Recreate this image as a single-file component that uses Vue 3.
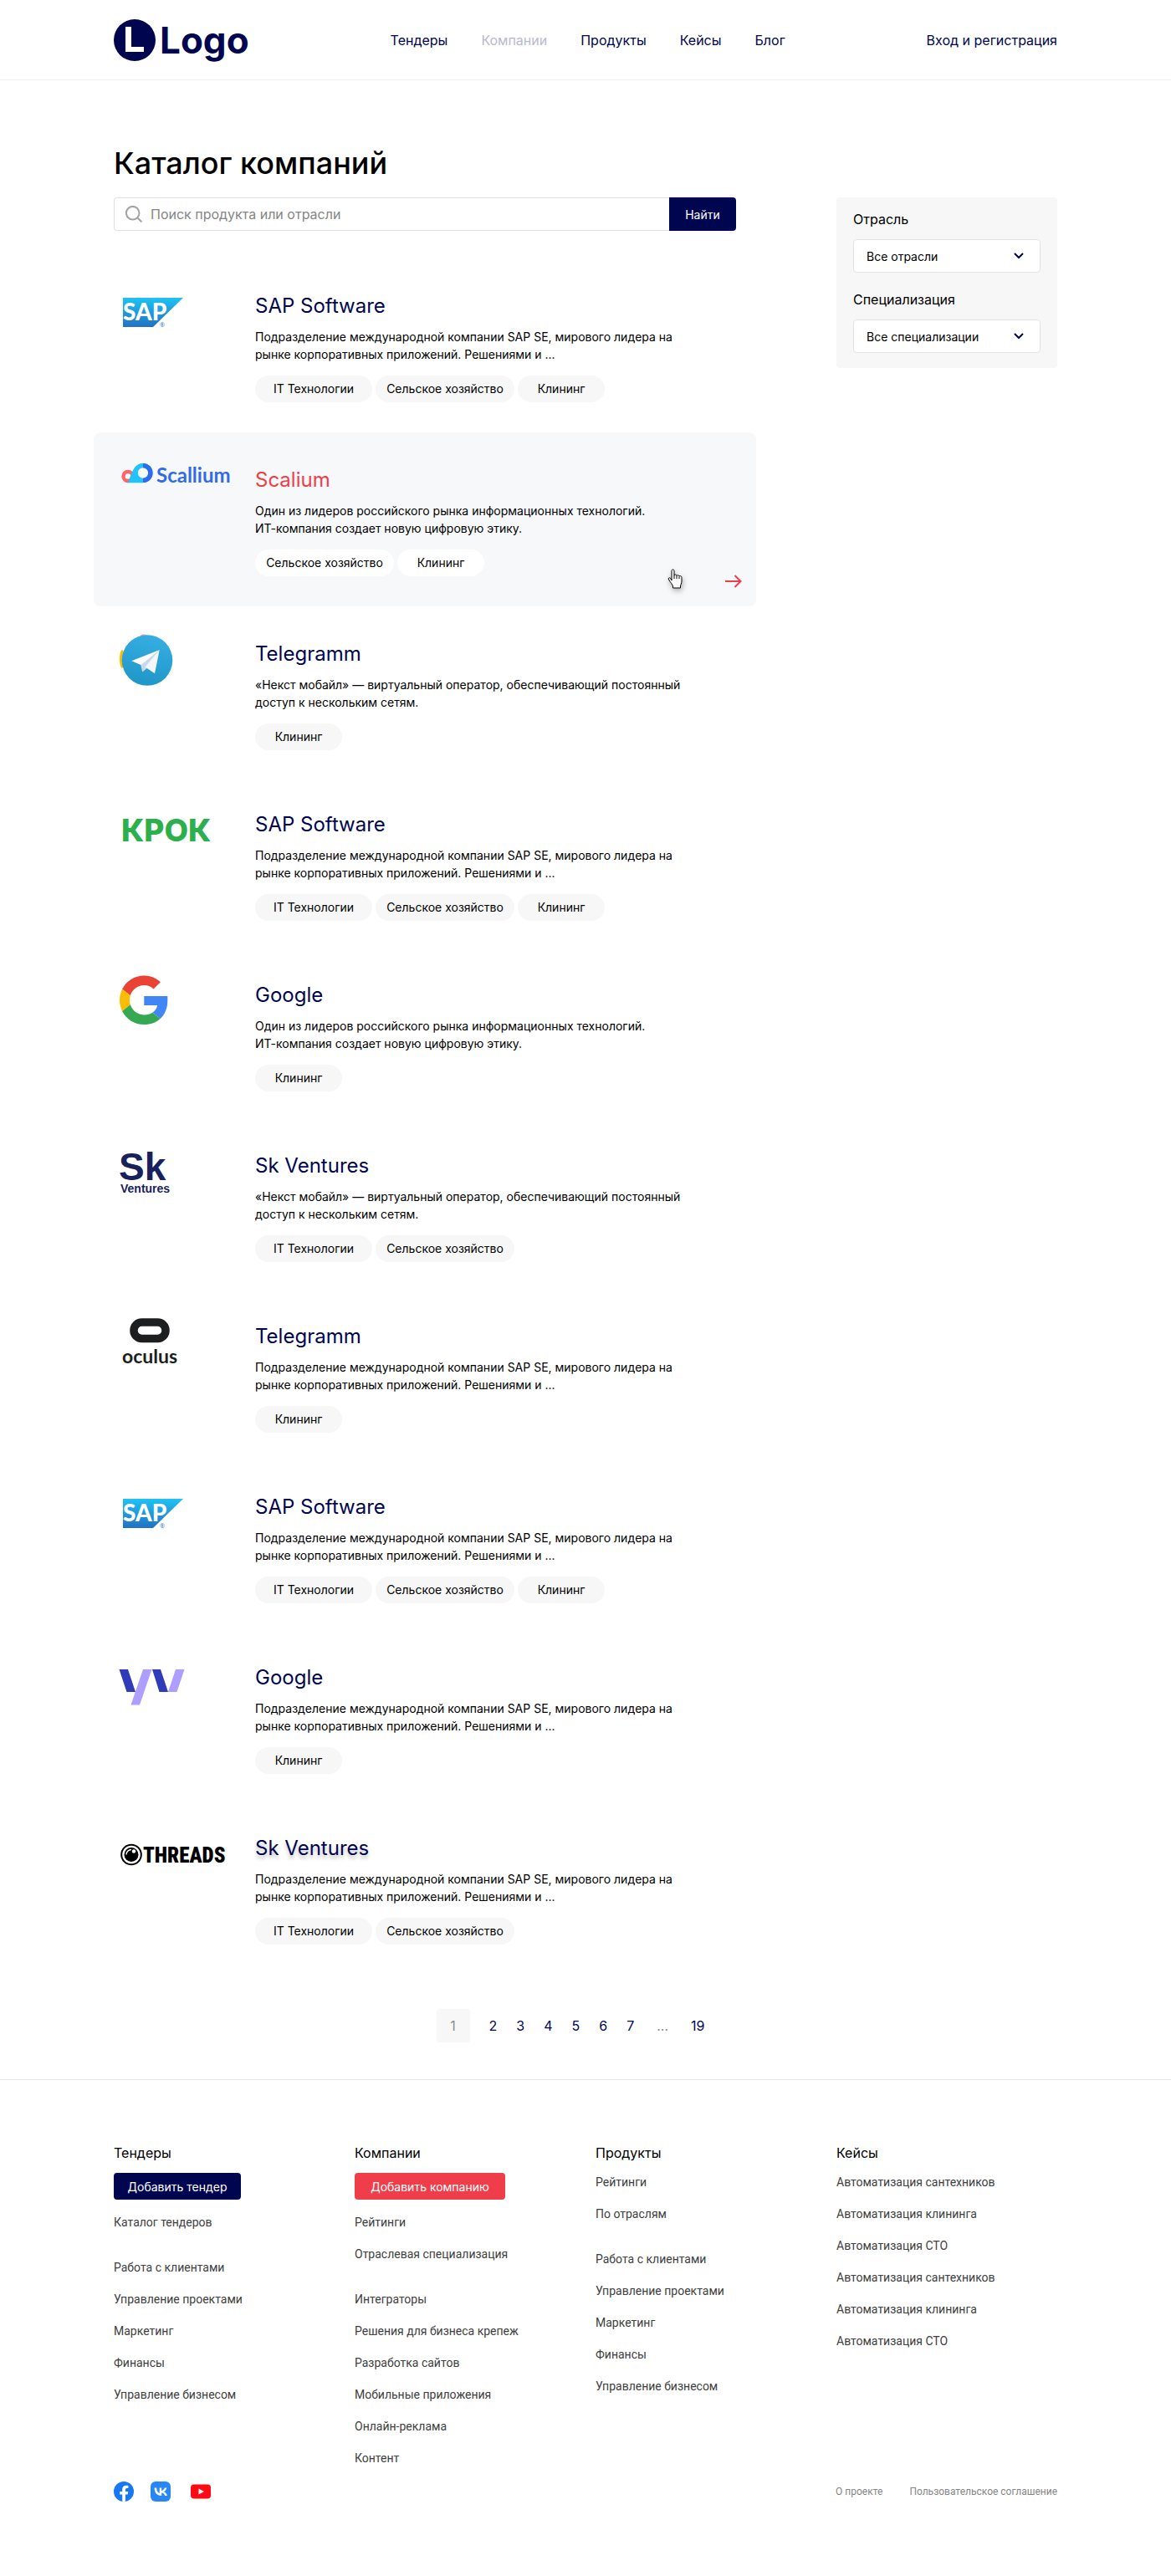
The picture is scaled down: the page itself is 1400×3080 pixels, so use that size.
<script setup>
import { ref } from 'vue'

const nav = ['Тендеры', 'Компании', 'Продукты', 'Кейсы', 'Блог']
const activeNav = 'Компании'

const query = ref('')
const industry = ref('Все отрасли')
const specialization = ref('Все специализации')

const about = {
  sap: ['Подразделение международной компании SAP SE, мирового лидера на', 'рынке корпоративных приложений. Решениями и ...'],
  it: ['Один из лидеров российского рынка информационных технологий.', 'ИТ-компания создает новую цифровую этику.'],
  next: ['«Некст мобайл» — виртуальный оператор, обеспечивающий постоянный', 'доступ к нескольким сетям.'],
}
const IT = 'IT Технологии'
const AGRO = 'Сельское хозяйство'
const CLEAN = 'Клининг'

const companies = [
  { logo: 'sap', name: 'SAP Software', text: about.sap, tags: [IT, AGRO, CLEAN] },
  { logo: 'scallium', name: 'Scalium', text: about.it, tags: [AGRO, CLEAN], featured: true },
  { logo: 'telegram', name: 'Telegramm', text: about.next, tags: [CLEAN] },
  { logo: 'krok', name: 'SAP Software', text: about.sap, tags: [IT, AGRO, CLEAN] },
  { logo: 'google', name: 'Google', text: about.it, tags: [CLEAN] },
  { logo: 'sk', name: 'Sk Ventures', text: about.next, tags: [IT, AGRO] },
  { logo: 'oculus', name: 'Telegramm', text: about.sap, tags: [CLEAN] },
  { logo: 'sap', name: 'SAP Software', text: about.sap, tags: [IT, AGRO, CLEAN] },
  { logo: 'yv', name: 'Google', text: about.sap, tags: [CLEAN] },
  { logo: 'threads', name: 'Sk Ventures', text: about.sap, tags: [IT, AGRO], shadow: true },
]
const tagClass = { [IT]: 'tag-it', [AGRO]: 'tag-agro', [CLEAN]: 'tag-clean' }

const pages = ['2', '3', '4', '5', '6', '7']

const footer = [
  {
    title: 'Тендеры',
    button: 'Добавить тендер',
    kind: 'navy',
    groups: [['Каталог тендеров'], ['Работа с клиентами', 'Управление проектами', 'Маркетинг', 'Финансы', 'Управление бизнесом']],
  },
  {
    title: 'Компании',
    button: 'Добавить компанию',
    kind: 'red',
    groups: [['Рейтинги', 'Отраслевая специализация'], ['Интеграторы', 'Решения для бизнеса крепеж', 'Разработка сайтов', 'Мобильные приложения', 'Онлайн-реклама', 'Контент']],
  },
  {
    title: 'Продукты',
    groups: [['Рейтинги', 'По отраслям'], ['Работа с клиентами', 'Управление проектами', 'Маркетинг', 'Финансы', 'Управление бизнесом']],
  },
  {
    title: 'Кейсы',
    groups: [['Автоматизация сантехников', 'Автоматизация клининга', 'Автоматизация СТО', 'Автоматизация сантехников', 'Автоматизация клининга', 'Автоматизация СТО']],
  },
]
</script>

<template>
  <div class="page">
    <header class="header">
      <div class="container header-row">
        <a class="brand" href="#" aria-label="Logo">
          <svg class="brand-mark" viewBox="0 0 50 50" aria-hidden="true">
            <circle cx="25" cy="25" r="25" fill="#00054f" />
            <path d="M14 9h7v24h15v6H14z" fill="#fff" />
          </svg>
          <span class="brand-name">Logo</span>
        </a>
        <nav class="nav">
          <a v-for="item in nav" :key="item" href="#" :class="{ active: item === activeNav }">{{ item }}</a>
        </nav>
        <a class="login" href="#">Вход и регистрация</a>
      </div>
    </header>

    <div class="container">
      <h1>Каталог компаний</h1>
      <div class="layout">
        <main>
          <form class="search" @submit.prevent>
            <label class="search-field">
              <svg viewBox="0 0 20 20" aria-hidden="true" fill="none" stroke="#a3a3a8" stroke-width="2">
                <circle cx="8.7" cy="8.7" r="7.8" />
                <path d="M14 14l5.4 5.4" />
              </svg>
              <input v-model="query" type="text" placeholder="Поиск продукта или отрасли" aria-label="Поиск продукта или отрасли" />
            </label>
            <button type="submit">Найти</button>
          </form>

          <ul class="companies">
            <li v-for="(c, i) in companies" :key="i" class="company" :class="{ featured: c.featured }">
              <div class="logo">
                <svg v-if="c.logo === 'sap'" viewBox="0 0 145 70">
                  <defs>
                    <linearGradient id="sapFill" x1="0" y1="0" x2="0" y2="1">
                      <stop offset="0" stop-color="#1fc3f3" />
                      <stop offset="1" stop-color="#2271c3" />
                    </linearGradient>
                  </defs>
                  <path d="M11 17h72L47 52H11z" fill="url(#sapFill)" />
                  <text x="11" y="44" class="t-sap">SAP</text>
                  <text x="55" y="52" class="t-reg">®</text>
                </svg>

                <svg v-else-if="c.logo === 'scallium'" viewBox="0 0 145 70">
                  <circle cx="17" cy="22.5" r="5.5" fill="none" stroke="#ff6468" stroke-width="4.4" />
                  <path d="M16.5 30.2C20 27 21 8 35 6.8v23.4z" fill="#22c3fb" />
                  <circle cx="35" cy="18.5" r="8.9" fill="#f7f8fa" stroke="#22c3fb" stroke-width="5.4" />
                  <path d="M35 9.6a8.9 8.9 0 0 1 0 17.8" fill="none" stroke="#2f6bea" stroke-width="5.4" />
                  <text x="51" y="30" class="t-scallium">Scallium</text>
                </svg>

                <svg v-else-if="c.logo === 'telegram'" viewBox="0 0 145 70">
                  <defs>
                    <linearGradient id="tgFill" x1=".6" y1="0" x2=".4" y2="1">
                      <stop offset="0" stop-color="#37aee2" />
                      <stop offset="1" stop-color="#1e96c8" />
                    </linearGradient>
                  </defs>
                  <ellipse cx="10" cy="33" rx="3" ry="11" fill="#fbbc05" />
                  <ellipse cx="36" cy="7" rx="5" ry="3.5" fill="#f09a93" />
                  <circle cx="40" cy="34.5" r="30.3" fill="url(#tgFill)" />
                  <path d="M32 39l2.3 9.5 6-5L54.7 22z" fill="#c8daea" />
                  <path d="M21.3 35.3L54.7 22 32.5 40z" fill="#fff" />
                  <path d="M37.5 42.5L54.7 22 49 50.3z" fill="#f2f7fb" />
                </svg>

                <svg v-else-if="c.logo === 'krok'" viewBox="0 0 145 70">
                  <text x="9" y="47" class="t-krok">КРОК</text>
                </svg>

                <svg v-else-if="c.logo === 'google'" viewBox="0 0 145 70">
                  <g transform="translate(7 3.5) scale(1.22)">
                    <path fill="#EA4335" d="M24 9.5c3.54 0 6.71 1.22 9.21 3.6l6.85-6.85C35.9 2.38 30.47 0 24 0 14.62 0 6.51 5.38 2.56 13.22l7.98 6.19C12.43 13.72 17.74 9.5 24 9.5z" />
                    <path fill="#4285F4" d="M46.98 20H24v9h13c-.6 3-2.3 5.5-4.8 7.2l7.73 6C44.4 38 46.98 32 46.98 24.55z" />
                    <path fill="#FBBC05" d="M10.53 28.59c-.48-1.45-.76-2.99-.76-4.59s.27-3.14.76-4.59l-7.98-6.19C.92 16.46 0 20.12 0 24s.92 7.54 2.56 10.78z" />
                    <path fill="#34A853" d="M24 48c6.48 0 11.93-2.13 15.89-5.81l-7.73-6c-2.15 1.45-4.92 2.3-8.16 2.3-6.26 0-11.57-4.22-13.47-9.91l-7.98 6.19C6.51 42.62 14.62 48 24 48z" />
                  </g>
                </svg>

                <svg v-else-if="c.logo === 'sk'" viewBox="0 0 145 70">
                  <text x="6" y="44" class="t-sk">Sk</text>
                  <text x="8" y="59" class="t-ventures">Ventures</text>
                </svg>

                <svg v-else-if="c.logo === 'oculus'" viewBox="0 0 145 70">
                  <rect x="24" y="10" width="38" height="19.5" rx="9.5" fill="#fff" stroke="#1c1e20" stroke-width="9.5" />
                  <text x="10" y="59" class="t-oculus">oculus</text>
                </svg>

                <svg v-else-if="c.logo === 'yv'" viewBox="0 0 145 70">
                  <path d="M6.5 17H17l9 27H15.5zM46 17h10l9 27H54.5z" fill="#2f3bb8" />
                  <path d="M35 17h10.5L31 59.5H20.5zM74 17h10.5l-9 27H65z" fill="#ad9eff" />
                </svg>

                <svg v-else viewBox="0 0 145 70">
                  <circle cx="21" cy="34.5" r="11.8" fill="#fff" stroke="#000" stroke-width="2" />
                  <circle cx="21" cy="34.5" r="8.5" />
                  <path d="M15 34.5a6 6 0 0 1 6-6" fill="none" stroke="#fff" stroke-width="1.4" />
                  <circle cx="24" cy="30.5" r="2.2" fill="#fff" />
                  <text x="35" y="44" class="t-threads">THREADS</text>
                </svg>
              </div>
              <div class="info">
                <h2 :class="{ shadow: c.shadow }"><a href="#">{{ c.name }}</a></h2>
                <p>{{ c.text[0] }}<br />{{ c.text[1] }}</p>
                <div class="tags">
                  <span v-for="t in c.tags" :key="t" class="tag" :class="tagClass[t]">{{ t }}</span>
                </div>
              </div>
              <template v-if="c.featured">
                <svg class="pointer" viewBox="0 0 18 24" aria-hidden="true">
                  <path d="M5 14V2.5C5 .4 8 .4 8 2.5V8c.3-1.5 3-1.3 3 .5.4-1.2 3-1 3 .7.5-1 3-.8 3 1.3V15c0 2.5-1.5 4-1.5 6v2h-9v-2C6 18.5 3.5 16.5 1.5 13c-1-1.8.8-3 2-1.8z" fill="#fff" stroke="#000" stroke-width="1" />
                  <path d="M8 8v4M11 8.5V12M14 9.5V12" stroke="#000" stroke-width="1" />
                </svg>
                <svg class="arrow" viewBox="0 0 20 16" aria-hidden="true" fill="none" stroke="#ef3e4a" stroke-width="2">
                  <path d="M0 8h18M11.5 1l7 7-7 7" />
                </svg>
              </template>
            </li>
          </ul>
        </main>

        <aside class="filters">
          <label for="industry">Отрасль</label>
          <div class="select">
            <select id="industry" v-model="industry">
              <option>Все отрасли</option>
            </select>
            <svg viewBox="0 0 12 8" aria-hidden="true"><path d="M1 1l5 5 5-5" fill="none" stroke="#00054f" stroke-width="2" /></svg>
          </div>
          <label for="specialization">Специализация</label>
          <div class="select">
            <select id="specialization" v-model="specialization">
              <option>Все специализации</option>
            </select>
            <svg viewBox="0 0 12 8" aria-hidden="true"><path d="M1 1l5 5 5-5" fill="none" stroke="#00054f" stroke-width="2" /></svg>
          </div>
        </aside>
      </div>

      <nav class="pagination" aria-label="Страницы">
        <a class="current" href="#" aria-current="page">1</a>
        <a v-for="p in pages" :key="p" href="#">{{ p }}</a>
        <span class="dots">...</span>
        <a class="last" href="#">19</a>
      </nav>
    </div>

    <footer class="footer">
      <div class="container">
        <div class="footer-grid">
          <section v-for="col in footer" :key="col.title">
            <h3>{{ col.title }}</h3>
            <button v-if="col.button" type="button" :class="col.kind">{{ col.button }}</button>
            <ul v-for="(group, g) in col.groups" :key="g">
              <li v-for="(link, l) in group" :key="l"><a href="#">{{ link }}</a></li>
            </ul>
          </section>
        </div>
        <div class="footer-bottom">
          <div class="social">
            <a href="#" aria-label="Facebook">
              <svg viewBox="0 0 24 24">
                <circle cx="12" cy="12" r="12" fill="#1877f2" />
                <path d="M16.7 15.5l.5-3.5h-3.3V9.8c0-1 .5-1.9 2-1.9h1.5V5s-1.4-.2-2.7-.2c-2.7 0-4.5 1.6-4.5 4.6V12h-3v3.5h3v8.3a12 12 0 0 0 3.7 0v-8.3z" fill="#fff" />
              </svg>
            </a>
            <a href="#" aria-label="VK">
              <svg viewBox="0 0 24 24">
                <rect width="24" height="24" rx="6" fill="#2787f5" />
                <path d="M13 17C7.7 17 4.6 13.3 4.5 7.5h2.7c.1 4.2 2 6 3.5 6.4V7.5h2.5v3.6c1.5-.2 3.1-1.9 3.7-3.6h2.5c-.4 2.3-2.2 4-3.4 4.7 1.2.6 3.2 2.1 4 4.8h-2.8c-.6-1.8-2.1-3.3-4-3.4V17z" fill="#fff" />
              </svg>
            </a>
            <a class="youtube" href="#" aria-label="YouTube">
              <svg viewBox="0 0 24 24">
                <rect y="3.5" width="24" height="17" rx="4" fill="#ff0a14" />
                <path d="M9.5 8.5l6.5 3.5-6.5 3.5z" fill="#fff" />
              </svg>
            </a>
          </div>
          <div class="legal">
            <a href="#">О проекте</a>
            <a href="#">Пользовательское соглашение</a>
          </div>
        </div>
      </div>
    </footer>
  </div>
</template>

<style>
body {
  margin: 0;
  background: #fff;
}
</style>

<style scoped>
.page {
  font-family: Inter, "Liberation Sans", sans-serif;
  font-size: 14px;
  color: #000;
}
.page * {
  box-sizing: border-box;
}
a {
  color: inherit;
  text-decoration: none;
}
button,
input,
select {
  font: inherit;
}
ul {
  list-style: none;
  margin: 0;
  padding: 0;
}
svg {
  display: block;
}
.container {
  max-width: 1128px;
  margin: 0 auto;
}

.header {
  border-bottom: 1px solid #f0f0f0;
}
.header-row {
  height: 95px;
  display: flex;
  align-items: center;
  justify-content: space-between;
  font-size: 16px;
  color: #00054f;
}
.brand {
  display: flex;
  align-items: center;
  gap: 5px;
}
.brand-mark {
  width: 50px;
  height: 50px;
}
.brand-name {
  font-size: 44px;
  font-weight: 700;
  line-height: 48px;
}
.nav {
  display: flex;
  gap: 40px;
}
.nav .active {
  color: #b8b9d0;
}

h1 {
  margin: 78px 0 20px;
  font-size: 36px;
  line-height: 42px;
  font-weight: 500;
}
.layout {
  display: grid;
  grid-template-columns: 1fr 264px;
  gap: 120px;
  align-items: start;
}

.search {
  display: flex;
  height: 40px;
}
.search-field {
  flex: 1;
  display: flex;
  align-items: center;
  gap: 10px;
  padding-left: 13px;
  border: 1px solid #e0e0e0;
  border-right: 0;
  border-radius: 4px 0 0 4px;
}
.search-field svg {
  width: 20px;
  height: 20px;
}
.search-field input {
  flex: 1;
  padding: 0;
  border: 0;
  outline: 0;
  background: none;
  font-size: 16px;
}
.search-field input::placeholder {
  color: #858585;
  opacity: 1;
}
.search button {
  width: 80px;
  border: 0;
  border-radius: 0 4px 4px 0;
  background: #00054f;
  color: #fff;
}

.companies {
  margin: 33px -24px 0;
}
.company {
  position: relative;
  display: grid;
  grid-template-columns: 145px 1fr;
  column-gap: 24px;
  min-height: 204px;
  padding: 30px 24px;
}
.company.featured {
  min-height: 208px;
  margin-top: 4px;
  border-radius: 8px;
  background: #f7f8fa;
}
.logo svg {
  width: 145px;
  height: 70px;
  overflow: visible;
}
.info {
  padding-top: 13px;
}
h2 {
  margin: 0;
  font-size: 24px;
  line-height: 28px;
  font-weight: 400;
  color: #00054f;
}
.featured h2 {
  color: #ef3e4a;
}
h2.shadow {
  text-shadow: 0 4px 4px rgba(0, 0, 0, 0.25);
}
.info p {
  margin: 12px 0 15px;
  line-height: 21px;
}
.tags {
  display: flex;
  gap: 4px;
}
.tag {
  height: 32px;
  border-radius: 16px;
  background: #f7f7f7;
  line-height: 32px;
  text-align: center;
}
.tag-it {
  width: 140px;
}
.tag-agro {
  width: 166px;
}
.tag-clean {
  width: 104px;
}
.featured .tag {
  background: #fff;
}
.pointer {
  position: absolute;
  right: 88px;
  bottom: 21px;
  width: 18px;
  height: 24px;
  filter: drop-shadow(1px 3px 3px rgba(0, 0, 0, 0.3));
}
.arrow {
  position: absolute;
  right: 17px;
  bottom: 22px;
  width: 20px;
  height: 16px;
}

.t-sap {
  font: 900 28px Lato, sans-serif;
  fill: #fff;
}
.t-reg {
  font: 400 7px "Open Sans", sans-serif;
  fill: #2271c3;
}
.t-scallium {
  font: 700 24px Lato, sans-serif;
  fill: #2f6bea;
}
.t-krok {
  font: 800 37px Inter, sans-serif;
  fill: #2bb04b;
}
.t-sk {
  font: 700 46px "Liberation Sans", sans-serif;
  fill: #18215c;
}
.t-ventures {
  font: 700 14px "Liberation Sans", sans-serif;
  fill: #18215c;
}
.t-oculus {
  font: 700 23px Lato, sans-serif;
  fill: #1c1e20;
}
.t-threads {
  font: 900 25px "Liberation Sans Narrow", "Roboto Condensed", sans-serif;
  fill: #000;
}

.filters {
  padding: 16px 20px 18px;
  border-radius: 4px;
  background: #f7f7f7;
}
.filters label {
  display: block;
  margin-bottom: 14px;
  font-size: 16px;
  line-height: 20px;
}
.select {
  display: grid;
  align-items: center;
}
.select + label {
  margin-top: 22px;
}
.select select,
.select svg {
  grid-area: 1 / 1;
}
.select select {
  appearance: none;
  height: 40px;
  padding: 0 40px 0 15px;
  border: 1px solid #e3e3e3;
  border-radius: 4px;
  background: #fff;
  color: #000;
}
.select svg {
  width: 12px;
  height: 8px;
  margin-right: 20px;
  justify-self: end;
  pointer-events: none;
}

.pagination {
  display: flex;
  justify-content: center;
  align-items: center;
  gap: 23px;
  margin: 45px 36px 44px 0;
  font-size: 16px;
  color: #00054f;
}
.current {
  width: 40px;
  height: 40px;
  border-radius: 4px;
  background: #f7f7f7;
  color: #8c8c8c;
  line-height: 40px;
  text-align: center;
}
.dots {
  margin: 0 4px;
  color: #8c8c8c;
}

.footer {
  padding: 77px 0 88px;
  border-top: 1px solid #e8e8e8;
  color: #404040;
}
.footer-grid {
  display: grid;
  grid-template-columns: repeat(4, 1fr);
  gap: 24px;
}
h3 {
  margin: 0;
  font-size: 16px;
  line-height: 20px;
  font-weight: 400;
  color: #000;
}
.footer button {
  display: block;
  height: 32px;
  margin: 14px 0 0;
  border: 0;
  border-radius: 4px;
  color: #fff;
  padding: 0;
}
.navy {
  width: 152px;
  background: #00054f;
}
.red {
  width: 180px;
  background: #ef3e4a;
}
.footer ul {
  display: grid;
  gap: 20px;
  margin-top: 36px;
  line-height: 18px;
  font-family: Roboto, sans-serif;
}
.footer h3 + ul {
  margin-top: 16px;
}
.footer button + ul {
  margin-top: 18px;
}
.footer-bottom {
  display: flex;
  align-items: center;
  justify-content: space-between;
  margin-top: 19px;
}
.social {
  display: flex;
  gap: 20px;
}
.social svg {
  width: 24px;
  height: 24px;
}
.youtube {
  margin-left: 4px;
}
.legal {
  display: flex;
  gap: 32px;
  font-family: Roboto, sans-serif;
  font-size: 12px;
  color: #858585;
}
</style>
